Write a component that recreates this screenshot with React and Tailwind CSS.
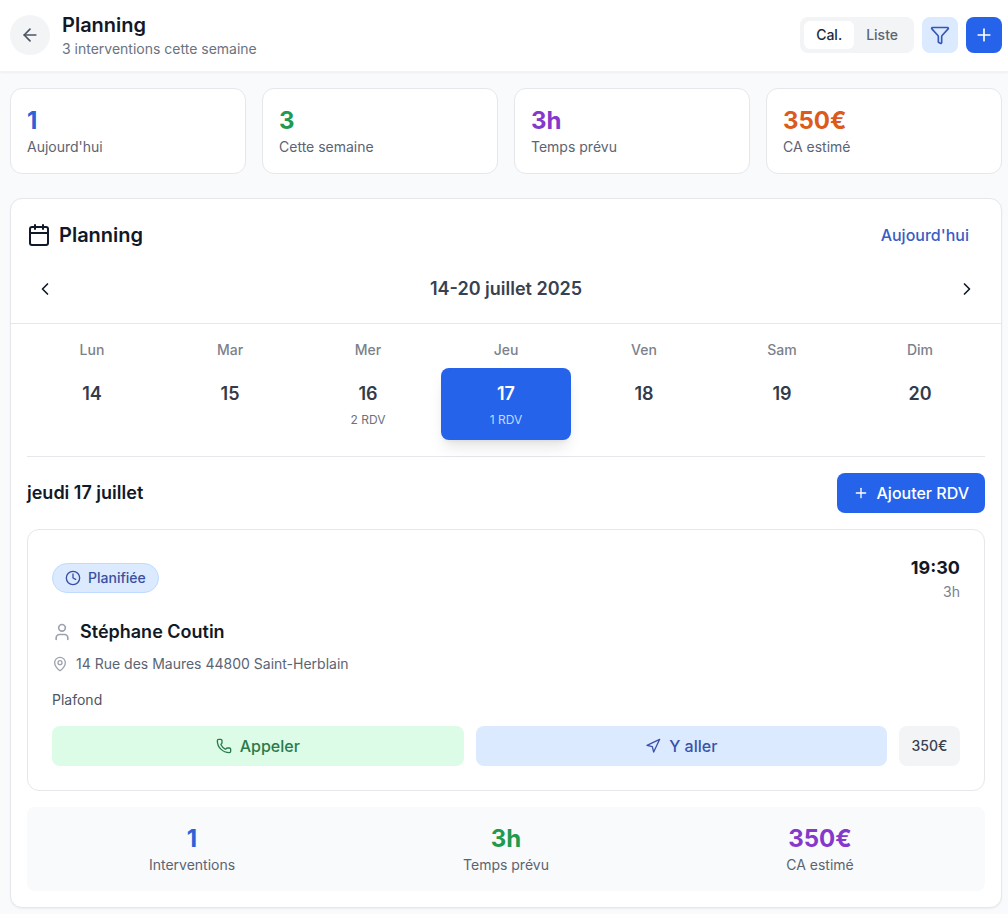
import { ArrowLeft, Calendar, ChevronLeft, ChevronRight, Clock, Filter, MapPin, Navigation, Phone, Plus, User } from 'lucide-react';

const stats = [
  { value: '1', label: "Aujourd'hui", color: 'text-[#2a62d8]' },
  { value: '3', label: 'Cette semaine', color: 'text-[#1f9a50]' },
  { value: '3h', label: 'Temps prévu', color: 'text-[#8538cc]' },
  { value: '350€', label: 'CA estimé', color: 'text-[#dc5a1c]' },
];

const days = [
  { name: 'Lun', num: '14' },
  { name: 'Mar', num: '15' },
  { name: 'Mer', num: '16', rdv: '2 RDV' },
  { name: 'Jeu', num: '17', rdv: '1 RDV', active: true },
  { name: 'Ven', num: '18' },
  { name: 'Sam', num: '19' },
  { name: 'Dim', num: '20' },
];

const summary = [
  { value: '1', label: 'Interventions', color: 'text-[#2a62d8]' },
  { value: '3h', label: 'Temps prévu', color: 'text-[#1f9a50]' },
  { value: '350€', label: 'CA estimé', color: 'text-[#8538cc]' },
];

const App = () => {
  return (
    <div className="min-h-[914px] bg-[#f9fafb] font-['Inter',sans-serif] text-[#111827]">
      {/* Header */}
      <header className="flex h-[72px] items-center justify-between border-b border-[#f3f4f6] bg-white pb-px pl-2.5 pr-1.5 shadow-[0_1px_2px_rgba(0,0,0,0.05)]">
        <div className="flex items-center gap-3">
          <button className="flex h-10 w-10 items-center justify-center rounded-full bg-[#f3f4f6] text-[#4b5563]">
            <ArrowLeft className="size-5" />
          </button>
          <div>
            <h1 className="text-xl leading-7 font-semibold">Planning</h1>
            <p className="text-sm leading-5 text-[#6b7280]">3 interventions cette semaine</p>
          </div>
        </div>
        <div className="flex items-center gap-2">
          <div className="flex h-9 items-center rounded-lg bg-[#f3f4f6] p-1">
            <span className="flex h-7 items-center rounded-md bg-white px-3 text-sm font-[450] text-[#1f2937]">Cal.</span>
            <span className="flex h-7 items-center px-3 text-sm font-[450] text-[#5b6472]">Liste</span>
          </div>
          <button className="flex h-9 w-9 items-center justify-center rounded-lg bg-[#dbeafe] text-[#3558b8]">
            <Filter className="size-5" />
          </button>
          <button className="flex h-9 w-9 items-center justify-center rounded-lg bg-[#2563eb] text-white">
            <Plus className="size-5" />
          </button>
        </div>
      </header>

      <main className="pb-1.5 pl-2.5 pr-1.5 pt-4">
        {/* Stats */}
        <div className="grid grid-cols-4 gap-4">
          {stats.map((s) => (
            <div key={s.label} className="h-[86px] rounded-xl border border-[#e5e7eb] bg-white p-4">
              <div className={`text-2xl leading-8 font-bold ${s.color}`}>{s.value}</div>
              <div className="text-sm leading-5 text-[#5b6472]">{s.label}</div>
            </div>
          ))}
        </div>

        {/* Planning card */}
        <section className="mt-6 h-[710px] rounded-xl border border-[#e5e7eb] bg-white shadow-[0_1px_2px_rgba(0,0,0,0.05)]">
          <div className="border-b border-[#e5e7eb] px-4 pt-4">
            <div className="flex h-10 items-center justify-between">
              <div className="flex items-center gap-2">
                <Calendar className="size-6" />
                <h2 className="text-xl font-semibold">Planning</h2>
              </div>
              <button className="flex h-10 items-center px-4 text-base font-[450] text-[#3a5cc4]">Aujourd'hui</button>
            </div>
            <div className="mb-4 mt-4 flex h-9 items-center justify-between">
              <button className="flex h-9 w-9 items-center justify-center text-[#111827]">
                <ChevronLeft className="size-5" />
              </button>
              <span className="text-lg font-semibold text-[#374151]">14-20 juillet 2025</span>
              <button className="flex h-9 w-9 items-center justify-center text-[#111827]">
                <ChevronRight className="size-5" />
              </button>
            </div>
          </div>

          <div className="px-4 pt-4">
            <div className="grid grid-cols-7 gap-2">
              {days.map((d) => (
                <div key={d.name} className="flex flex-col items-center">
                  <span className="text-sm leading-5 font-[450] text-[#7b818c]">{d.name}</span>
                  <div
                    className={
                      d.active
                        ? 'mt-2 flex h-[72px] w-full flex-col items-center rounded-lg bg-[#2563eb] pt-3 text-white shadow-lg'
                        : 'mt-2 flex h-[72px] w-full flex-col items-center pt-3 text-[#333b4a]'
                    }
                  >
                    <span className="text-lg leading-7 font-semibold">{d.num}</span>
                    {d.rdv && (
                      <span className={d.active ? 'mt-1 text-xs leading-4 text-[#bfdbfe]' : 'mt-1 text-xs leading-4 text-[#6b7280]'}>{d.rdv}</span>
                    )}
                  </div>
                </div>
              ))}
            </div>

            <div className="mt-4 flex items-center justify-between border-t border-[#e5e7eb] pt-4">
              <h3 className="text-lg font-semibold">jeudi 17 juillet</h3>
              <button className="flex h-10 items-center gap-2 rounded-lg bg-[#2563eb] px-4 text-base font-[450] text-white">
                <Plus className="size-4" />
                Ajouter RDV
              </button>
            </div>

            {/* Appointment */}
            <div className="mt-4 h-[262px] rounded-xl border border-[#e5e7eb] bg-white px-6 pt-6">
              <div className="flex items-start justify-between">
                <div className="mt-[9px] flex h-[30px] w-[107px] items-center gap-[7px] rounded-full border border-[#bfdbfe] bg-[#dbeafe] px-3 text-sm font-[450] text-[#3a4fa0]">
                  <Clock className="size-4" />
                  Planifiée
                </div>
                <div className="text-right">
                  <div className="text-lg leading-7 font-bold">19:30</div>
                  <div className="text-sm leading-5 text-[#7b818c]">3h</div>
                </div>
              </div>
              <div className="mt-4 flex items-center gap-2">
                <User className="size-5 text-[#9ca3af]" />
                <span className="text-lg leading-7 font-semibold">Stéphane Coutin</span>
              </div>
              <div className="mt-2 flex items-center gap-2 text-sm leading-5 text-[#5b6472]">
                <MapPin className="size-4 text-[#9ca3af]" />
                14 Rue des Maures 44800 Saint-Herblain
              </div>
              <p className="mt-4 text-sm leading-5 text-[#4b5563]">Plafond</p>
              <div className="mt-4 flex gap-3">
                <button className="flex h-10 flex-1 items-center justify-center gap-2 rounded-lg bg-[#dcfce7] text-base font-[450] text-[#2a7a4b]">
                  <Phone className="size-4" />
                  Appeler
                </button>
                <button className="flex h-10 flex-1 items-center justify-center gap-2 rounded-lg bg-[#dbeafe] text-base font-[450] text-[#3a52a8]">
                  <Navigation className="size-4" />
                  Y aller
                </button>
                <div className="flex h-10 w-[61px] items-center justify-center rounded-lg bg-[#f3f4f6] text-sm font-[450] text-[#374151]">350€</div>
              </div>
            </div>

            {/* Summary */}
            <div className="mt-4 grid h-[84px] grid-cols-3 gap-4 rounded-lg bg-[#f9fafb] p-4">
              {summary.map((s) => (
                <div key={s.label} className="text-center">
                  <div className={`text-2xl leading-8 font-bold ${s.color}`}>{s.value}</div>
                  <div className="text-sm leading-5 text-[#5b6472]">{s.label}</div>
                </div>
              ))}
            </div>
          </div>
        </section>
      </main>
    </div>
  );
};

export default App;
